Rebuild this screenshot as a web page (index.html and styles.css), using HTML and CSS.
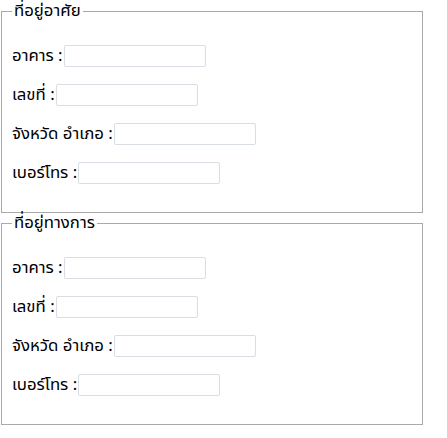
FILE: index.html
```html
<!DOCTYPE html>
<html lang="th">
<head>
<meta charset="utf-8">
<title>ที่อยู่</title>
<link rel="stylesheet" href="styles.css">
</head>
<body>
<form class="form">
  <fieldset class="group">
    <legend class="group-title">ที่อยู่อาศัย</legend>
    <div class="row"><label class="label">อาคาร :</label><input class="field" type="text"></div>
    <div class="row"><label class="label">เลขที่ :</label><input class="field" type="text"></div>
    <div class="row"><label class="label">จังหวัด อำเภอ :</label><input class="field" type="text"></div>
    <div class="row"><label class="label">เบอร์โทร :</label><input class="field" type="text"></div>
  </fieldset>
  <fieldset class="group">
    <legend class="group-title">ที่อยู่ทางการ</legend>
    <div class="row"><label class="label">อาคาร :</label><input class="field" type="text"></div>
    <div class="row"><label class="label">เลขที่ :</label><input class="field" type="text"></div>
    <div class="row"><label class="label">จังหวัด อำเภอ :</label><input class="field" type="text"></div>
    <div class="row"><label class="label">เบอร์โทร :</label><input class="field" type="text"></div>
  </fieldset>
</form>
</body>
</html>
```

FILE: styles.css
```css
html, body {
  margin: 0;
  padding: 0;
  background: #fff;
}
body {
  font-family: Tahoma, "Noto Sans Thai", "Noto Sans", sans-serif;
  font-size: 16.8px;
  color: #000;
}
.form {
  margin: 0;
  padding-top: 1px;
}
.group {
  box-sizing: border-box;
  width: 422px;
  margin: 0 0 0 1px;
  padding: 23px 10px 28px 10px;
  border: 1px solid #a9a9a9;
}
.group-title {
  padding: 0 2px;
  margin: 0;
  line-height: 21px;
}
.row {
  display: flex;
  align-items: center;
  height: 22px;
  margin-bottom: 17px;
}
.row:last-child {
  margin-bottom: 0;
}
.label {
  white-space: nowrap;
}
.field {
  box-sizing: border-box;
  width: 142px;
  height: 22px;
  margin: 0 0 0 1px;
  padding: 1px 3px;
  border: 1px solid #d9dde4;
  border-radius: 2px;
  background: #fff;
  font: inherit;
}
```
